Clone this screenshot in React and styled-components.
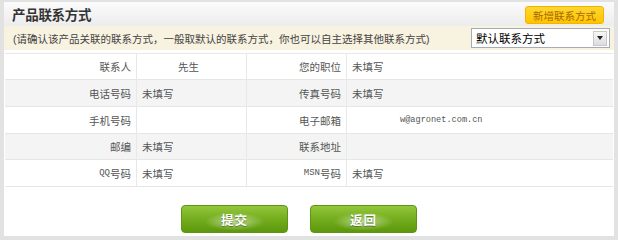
import styled, { createGlobalStyle } from "styled-components";

const GlobalStyle = createGlobalStyle`
  html, body {
    margin: 0;
    padding: 0;
    background: #fff;
  }
  body {
    font-family: "Liberation Sans", "Noto Sans CJK SC", sans-serif;
    font-size: 10.5px;
    color: #555;
  }
`;

const rows = [
  ["联系人", "先生", "您的职位", "未填写"],
  ["电话号码", "未填写", "传真号码", "未填写"],
  ["手机号码", "", "电子邮箱", "w@agronet.com.cn"],
  ["邮编", "未填写", "联系地址", ""],
  ["QQ号码", "未填写", "MSN号码", "未填写"],
];

const Panel = styled.div`
  box-sizing: border-box;
  width: 618px;
  height: 240px;
  border-style: solid;
  border-color: #e2e2e2;
  border-width: 2px 4px 4px 4px;
  background: #fff;
  display: flex;
  flex-direction: column;
`;

const Header = styled.div`
  height: 24px;
  display: flex;
  align-items: center;
  justify-content: space-between;
  padding: 0 10px 0 8px;
  background: linear-gradient(#fbfbfb, #ececec);
`;

const Title = styled.h2`
  margin: 0;
  font-size: 13.5px;
  font-weight: bold;
  color: #333;
  letter-spacing: -0.3px;
`;

const AddButton = styled.button`
  box-sizing: border-box;
  width: 79px;
  height: 18px;
  margin-top: 2px;
  padding: 0;
  border: 1px solid #f3b400;
  border-radius: 3px;
  background: linear-gradient(#ffd633, #ffc400);
  color: #a66a00;
  font-family: inherit;
  font-size: 10.5px;
`;

const Notice = styled.div`
  height: 24px;
  display: flex;
  align-items: center;
  justify-content: space-between;
  padding: 0 4px 0 9px;
  background: #f8f2e1;
  color: #444;
`;

const Select = styled.div`
  box-sizing: border-box;
  width: 139px;
  height: 20px;
  display: flex;
  align-items: center;
  justify-content: space-between;
  border: 1px solid #a5acb5;
  background: #fff;
  padding: 0 2px 0 4px;
  color: #000;
  font-size: 11.5px;
`;

const Arrow = styled.span`
  box-sizing: border-box;
  width: 14px;
  height: 15px;
  display: flex;
  align-items: center;
  justify-content: center;
  border: 1px solid #c9c9c9;
  background: linear-gradient(#f7f7f7, #dcdcdc);
  &::after {
    content: "";
    border-left: 3px solid transparent;
    border-right: 3px solid transparent;
    border-top: 4px solid #222;
  }
`;

const Table = styled.div`
  margin: 3px 1px 0 1px;
  display: grid;
  grid-template-columns: 132px 110px 100px 1fr;
  grid-template-rows: 26px 27px 27px 26px 27px;
  border-top: 1px solid #e8e8e8;
`;

const Cell = styled.div`
  box-sizing: border-box;
  display: flex;
  align-items: center;
  justify-content: ${(p) => (p.$label ? "flex-end" : "flex-start")};
  padding: ${(p) => (p.$label ? "0 5px 0 0" : "0 0 0 5px")};
  border-bottom: 1px solid #e6e6e6;
  border-right: ${(p) => (p.$last ? "none" : "1px solid #e8e8e8")};
  background: ${(p) => (p.$odd ? "#f4f4f4" : "#fff")};
  color: #555;
  white-space: pre;
`;

const Mono = styled.span`
  font-family: "Liberation Mono", monospace;
  font-size: ${(p) => p.$size || 9}px;
  color: #555;
  margin-left: ${(p) => p.$indent || 0}px;
`;

const Indented = styled.span`
  margin-left: ${(p) => p.$indent || 0}px;
`;

const Footer = styled.div`
  display: flex;
  justify-content: center;
  gap: 22px;
  padding: 18px 20px 0 0;
`;

const GreenButton = styled.button`
  box-sizing: border-box;
  width: 107px;
  height: 28px;
  padding: 0;
  border: 1px solid #5f9313;
  border-radius: 4px;
  background:
    radial-gradient(ellipse 30px 9px at 50% 60%, rgba(255, 255, 255, 0.55), rgba(255, 255, 255, 0) 100%),
    linear-gradient(#93c73d 0%, #74ad1d 50%, #5d980c 100%);
  color: #fff;
  font-family: "Noto Sans CJK SC", sans-serif;
  font-size: 12.5px;
  font-weight: bold;
  text-shadow: 0 1px 1px rgba(40, 80, 0, 0.6);
  letter-spacing: 1px;
`;

function renderValue(text, i) {
  if (i === 2 && text.includes("@")) return <Mono $indent={48} $size={8.6}>{text}</Mono>;
  if (text === "先生") return <Indented $indent={36}>{text}</Indented>;
  return text;
}

function renderLabel(text) {
  const m = text.match(/^([A-Z]+)(.*)$/);
  if (!m) return text;
  return (
    <>
      <Mono>{m[1]}</Mono>
      {m[2]}
    </>
  );
}

export default function App() {
  return (
    <>
      <GlobalStyle />
      <Panel>
        <Header>
          <Title>产品联系方式</Title>
          <AddButton>新增联系方式</AddButton>
        </Header>
        <Notice>
          <span>(请确认该产品关联的联系方式，一般取默认的联系方式，你也可以自主选择其他联系方式)</span>
          <Select>
            默认联系方式
            <Arrow />
          </Select>
        </Notice>
        <Table>
          {rows.map((r, i) =>
            r.map((c, j) => (
              <Cell key={`${i}-${j}`} $label={j % 2 === 0} $odd={i % 2 === 1} $last={j === 3}>
                {j % 2 === 0 ? renderLabel(c) : renderValue(c, i)}
              </Cell>
            ))
          )}
        </Table>
        <Footer>
          <GreenButton>提交</GreenButton>
          <GreenButton>返回</GreenButton>
        </Footer>
      </Panel>
    </>
  );
}
